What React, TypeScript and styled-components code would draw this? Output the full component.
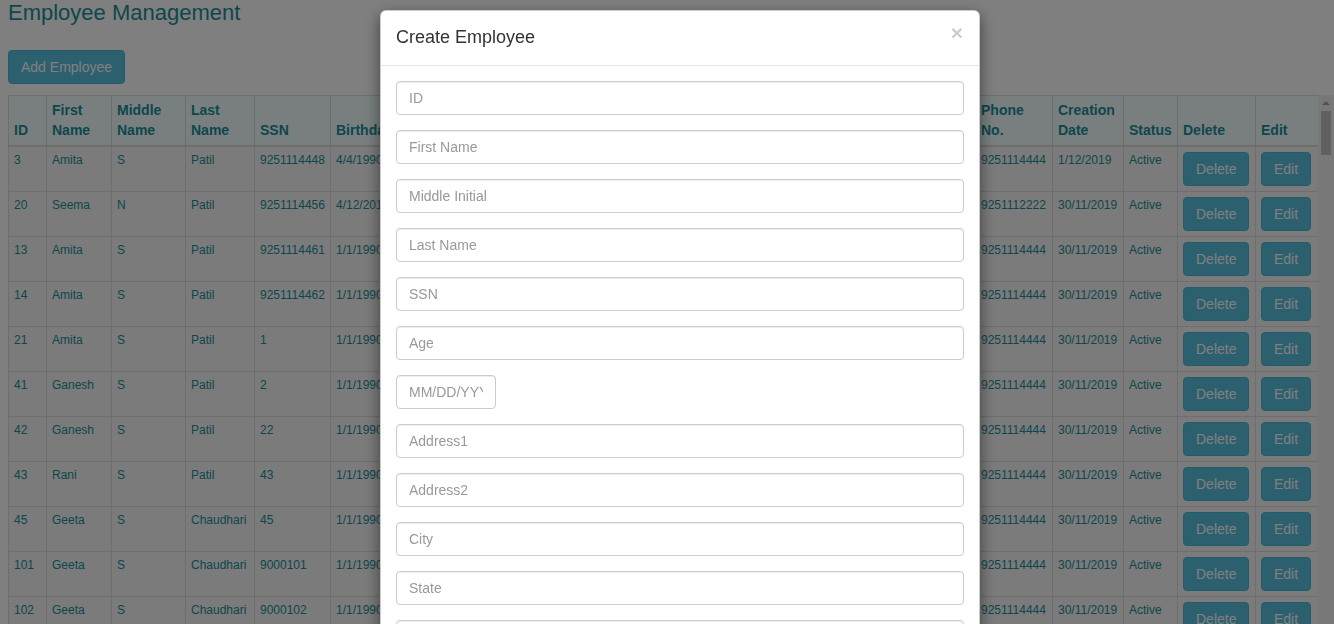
import React from 'react';
import styled, { createGlobalStyle } from 'styled-components';

const GlobalStyle = createGlobalStyle`
  html, body {
    margin: 0;
    padding: 0;
    overflow: hidden;
  }
  body {
    font-family: "Liberation Sans", Arial, Helvetica, sans-serif;
    font-size: 14px;
    line-height: 1.42857;
    color: #333;
    background: #fff;
  }
  * {
    box-sizing: border-box;
  }
`;

const teal = '#1a8f9a';

const Page = styled.div`
  height: 100vh;
  display: flex;
  flex-direction: column;
`;

const Title = styled.h3`
  margin: 0 0 24px 8px;
  font-size: 22px;
  font-weight: 400;
  line-height: 26px;
  color: ${teal};
`;

const Button = styled.button`
  display: inline-block;
  font-family: inherit;
  font-size: 14px;
  line-height: 20px;
  padding: 6px 12px;
  color: #fff;
  background: #5bc0de;
  border: 1px solid #46b8da;
  border-radius: 4px;
  cursor: pointer;
  white-space: nowrap;
`;

const Toolbar = styled.div`
  padding-left: 8px;
  margin-bottom: 11px;
`;

const TableArea = styled.div`
  flex: 1;
  min-height: 0;
  display: flex;
  padding-left: 8px;
`;

const TableScroll = styled.div`
  width: 1310px;
  overflow: hidden;
`;

const ScrollTrack = styled.div`
  width: 16px;
  background: #f1f1f1;
  display: flex;
  flex-direction: column;
  align-items: center;
  padding-top: 6px;
`;

const ScrollArrow = styled.div`
  width: 0;
  height: 0;
  border-left: 4px solid transparent;
  border-right: 4px solid transparent;
  border-bottom: 4px solid #a3a3a3;
  margin-bottom: 6px;
`;

const ScrollThumb = styled.div`
  width: 10px;
  height: 44px;
  background: #c1c1c1;
`;

const Table = styled.table`
  width: 1310px;
  table-layout: fixed;
  border-collapse: collapse;
`;

const Th = styled.th<{ $w: number }>`
  width: ${p => p.$w}px;
  padding: 4px 5px 5px;
  text-align: left;
  vertical-align: bottom;
  font-size: 14px;
  font-weight: 700;
  line-height: 20px;
  color: ${teal};
  background: #f3ffff;
  border: 1px solid #ddd;
  border-bottom: 2px solid #ddd;
  overflow: hidden;
  white-space: normal;
`;

const Td = styled.td`
  padding: 5px;
  vertical-align: top;
  font-size: 12px;
  line-height: 17px;
  color: ${teal};
  background: #f6f6f6;
  border: 1px solid #ddd;
  overflow: hidden;
  white-space: nowrap;
`;

const Backdrop = styled.div`
  position: fixed;
  inset: 0;
  background: rgba(0, 0, 0, 0.5);
`;

const ModalLayer = styled.div`
  position: fixed;
  inset: 0;
  overflow: hidden;
`;

const Dialog = styled.div`
  width: 600px;
  margin: 10px 0 0 380px;
  background: #fff;
  border: 1px solid rgba(0, 0, 0, 0.2);
  border-radius: 6px;
  box-shadow: 0 5px 15px rgba(0, 0, 0, 0.5);
`;

const ModalHeader = styled.div`
  display: flex;
  align-items: flex-start;
  justify-content: space-between;
  padding: 15px 15px 17px;
  border-bottom: 1px solid #e5e5e5;
`;

const ModalTitle = styled.h4`
  margin: 0;
  font-size: 18px;
  font-weight: 400;
  line-height: 22px;
  color: #333;
`;

const Close = styled.button`
  margin-top: -4px;
  margin-right: 1px;
  padding: 0;
  background: transparent;
  border: 0;
  font-family: inherit;
  font-size: 21px;
  font-weight: 700;
  line-height: 1;
  color: #000;
  opacity: 0.2;
  cursor: pointer;
`;

const ModalBody = styled.div`
  padding: 15px;
`;

const FormGroup = styled.div`
  margin-bottom: 15px;
`;

const Input = styled.input<{ $narrow?: boolean }>`
  display: block;
  width: ${p => (p.$narrow ? '100px' : '100%')};
  height: 34px;
  padding: 6px 12px;
  font-family: inherit;
  font-size: 14px;
  line-height: 1.42857;
  color: #555;
  background: #fff;
  border: 1px solid #ccc;
  border-radius: 4px;
  box-shadow: inset 0 1px 1px rgba(0, 0, 0, 0.075);

  &::placeholder {
    color: #999;
  }
`;

const columns: [string, number][] = [
  ['ID', 38],
  ['First Name', 65],
  ['Middle Name', 74],
  ['Last Name', 69],
  ['SSN', 76],
  ['Birthday', 70],
  ['Age', 40],
  ['Address1', 110],
  ['Address2', 110],
  ['City', 80],
  ['State', 80],
  ['Zip', 65],
  ['Country', 90],
  ['Phone No.', 77],
  ['Creation Date', 71],
  ['Status', 54],
  ['Delete', 78],
  ['Edit', 63],
];

type Row = {
  id: number;
  first: string;
  middle: string;
  last: string;
  ssn: string;
  birthday: string;
  phone: string;
  created: string;
};

const rows: Row[] = [
  { id: 3, first: 'Amita', middle: 'S', last: 'Patil', ssn: '9251114448', birthday: '4/4/1990', phone: '9251114444', created: '1/12/2019' },
  { id: 20, first: 'Seema', middle: 'N', last: 'Patil', ssn: '9251114456', birthday: '4/12/2019', phone: '9251112222', created: '30/11/2019' },
  { id: 13, first: 'Amita', middle: 'S', last: 'Patil', ssn: '9251114461', birthday: '1/1/1990', phone: '9251114444', created: '30/11/2019' },
  { id: 14, first: 'Amita', middle: 'S', last: 'Patil', ssn: '9251114462', birthday: '1/1/1990', phone: '9251114444', created: '30/11/2019' },
  { id: 21, first: 'Amita', middle: 'S', last: 'Patil', ssn: '1', birthday: '1/1/1990', phone: '9251114444', created: '30/11/2019' },
  { id: 41, first: 'Ganesh', middle: 'S', last: 'Patil', ssn: '2', birthday: '1/1/1990', phone: '9251114444', created: '30/11/2019' },
  { id: 42, first: 'Ganesh', middle: 'S', last: 'Patil', ssn: '22', birthday: '1/1/1990', phone: '9251114444', created: '30/11/2019' },
  { id: 43, first: 'Rani', middle: 'S', last: 'Patil', ssn: '43', birthday: '1/1/1990', phone: '9251114444', created: '30/11/2019' },
  { id: 45, first: 'Geeta', middle: 'S', last: 'Chaudhari', ssn: '45', birthday: '1/1/1990', phone: '9251114444', created: '30/11/2019' },
  { id: 101, first: 'Geeta', middle: 'S', last: 'Chaudhari', ssn: '9000101', birthday: '1/1/1990', phone: '9251114444', created: '30/11/2019' },
  { id: 102, first: 'Geeta', middle: 'S', last: 'Chaudhari', ssn: '9000102', birthday: '1/1/1990', phone: '9251114444', created: '30/11/2019' },
];

const fields = [
  'ID',
  'First Name',
  'Middle Initial',
  'Last Name',
  'SSN',
  'Age',
  'MM/DD/YYYY',
  'Address1',
  'Address2',
  'City',
  'State',
  'Zip',
];

export default function App() {
  return (
    <>
      <GlobalStyle />
      <Page>
        <Title>Employee Management</Title>
        <Toolbar>
          <Button>Add Employee</Button>
        </Toolbar>
        <TableArea>
          <TableScroll>
            <Table>
              <thead>
                <tr>
                  {columns.map(([label, w]) => (
                    <Th key={label} $w={w}>{label}</Th>
                  ))}
                </tr>
              </thead>
              <tbody>
                {rows.map(r => (
                  <tr key={r.id}>
                    <Td>{r.id}</Td>
                    <Td>{r.first}</Td>
                    <Td>{r.middle}</Td>
                    <Td>{r.last}</Td>
                    <Td>{r.ssn}</Td>
                    <Td>{r.birthday}</Td>
                    <Td>29</Td>
                    <Td>Kothrud</Td>
                    <Td>Karve Road</Td>
                    <Td>Pune</Td>
                    <Td>MH</Td>
                    <Td>411038</Td>
                    <Td>India</Td>
                    <Td>{r.phone}</Td>
                    <Td>{r.created}</Td>
                    <Td>Active</Td>
                    <Td><Button>Delete</Button></Td>
                    <Td><Button>Edit</Button></Td>
                  </tr>
                ))}
              </tbody>
            </Table>
          </TableScroll>
          <ScrollTrack>
            <ScrollArrow />
            <ScrollThumb />
          </ScrollTrack>
        </TableArea>
      </Page>
      <Backdrop />
      <ModalLayer>
        <Dialog>
          <ModalHeader>
            <ModalTitle>Create Employee</ModalTitle>
            <Close aria-label="Close">×</Close>
          </ModalHeader>
          <ModalBody>
            {fields.map(f => (
              <FormGroup key={f}>
                <Input placeholder={f} $narrow={f === 'MM/DD/YYYY'} />
              </FormGroup>
            ))}
          </ModalBody>
        </Dialog>
      </ModalLayer>
    </>
  );
}
